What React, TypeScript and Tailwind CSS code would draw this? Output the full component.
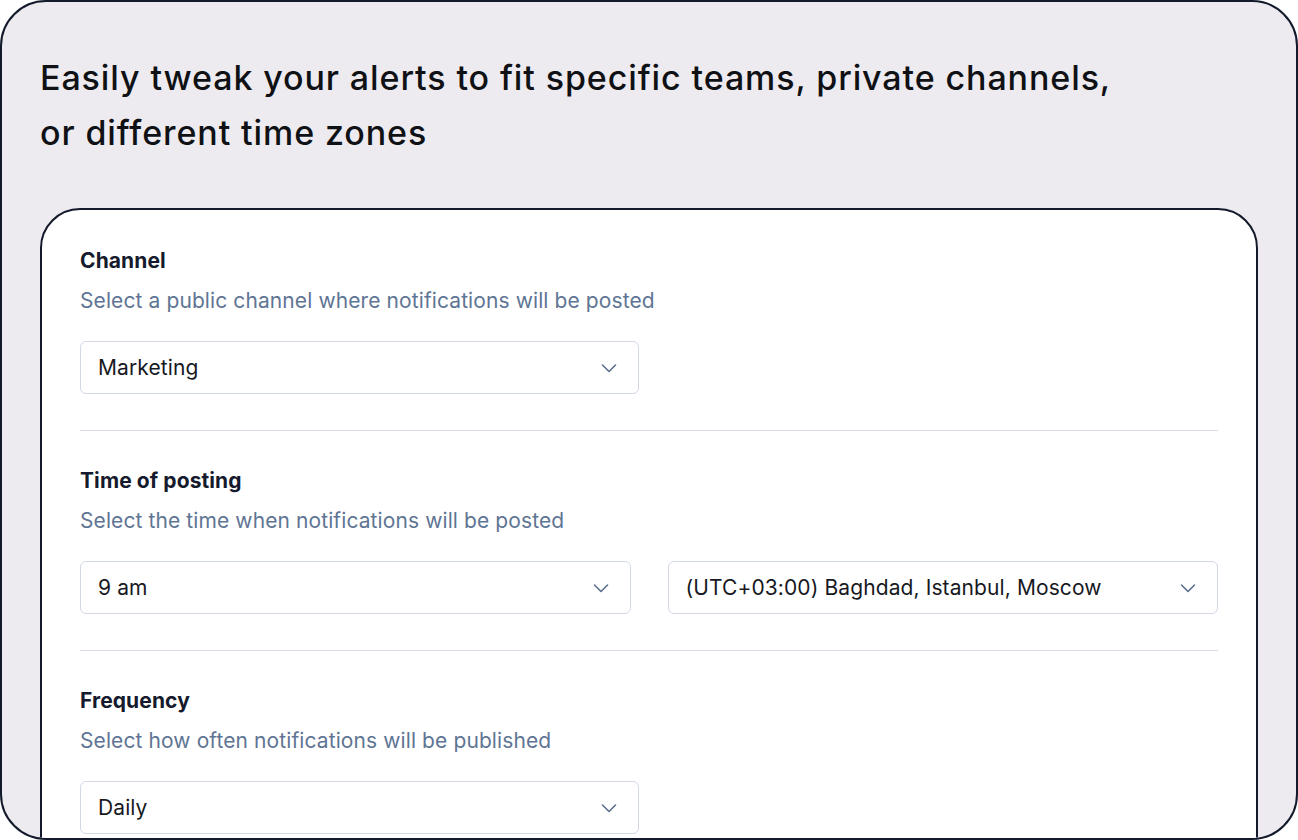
import React from "react";

const Chevron = () => (
  <svg width="16" height="10" viewBox="0 0 16 10" fill="none" className="shrink-0">
    <path d="M1.5 2 8 8.5 14.5 2" stroke="#5b6f8d" strokeWidth="1.6" strokeLinecap="round" strokeLinejoin="round" />
  </svg>
);

const Select = ({ value, className = "" }: { value: string; className?: string }) => (
  <div
    className={`h-[53px] flex items-center justify-between pl-[17px] pr-[21px] border border-[#d3d8e7] rounded-[6px] bg-white ${className}`}
  >
    <span className="text-[21px] tracking-[0.1px] text-[#17191f]">{value}</span>
    <Chevron />
  </div>
);

const Section = ({
  title,
  hint,
  children,
}: {
  title: string;
  hint: string;
  children: React.ReactNode;
}) => (
  <div>
    <h3 className="text-[21px] leading-[28px] font-bold tracking-[0.1px] text-[#151a2c]">{title}</h3>
    <p className="mt-3 text-[21px] leading-[28px] tracking-[0.1px] text-[#5f7594]">{hint}</p>
    <div className="mt-[26px]">{children}</div>
  </div>
);

const Divider = () => <div className="h-px bg-[#d9dde8] my-9" />;

export default function App() {
  return (
    <div className="w-[1298px] h-[840px] bg-white" style={{ fontFamily: "Inter, 'Noto Sans', sans-serif" }}>
      <div className="w-full h-full rounded-[46px] border-2 border-[#131a2b] bg-[#edebef] overflow-hidden px-[38px] pt-[48px]">
        <h1 className="text-[34px] leading-[55px] font-medium text-[#0f1115] tracking-[0.9px]">
          Easily tweak your alerts to fit specific teams, private channels,
          <br />
          or different time zones
        </h1>

        <div className="mt-12 rounded-[40px] border-2 border-[#131a2b] bg-white px-[38px] pt-[37px] pb-10">
          <Section title="Channel" hint="Select a public channel where notifications will be posted">
            <Select value="Marketing" className="w-[559px]" />
          </Section>

          <Divider />

          <Section title="Time of posting" hint="Select the time when notifications will be posted">
            <div className="grid grid-cols-2 gap-[37px]">
              <Select value="9 am" />
              <Select value="(UTC+03:00) Baghdad, Istanbul, Moscow" />
            </div>
          </Section>

          <Divider />

          <Section title="Frequency" hint="Select how often notifications will be published">
            <Select value="Daily" className="w-[559px]" />
          </Section>
        </div>
      </div>
    </div>
  );
}
